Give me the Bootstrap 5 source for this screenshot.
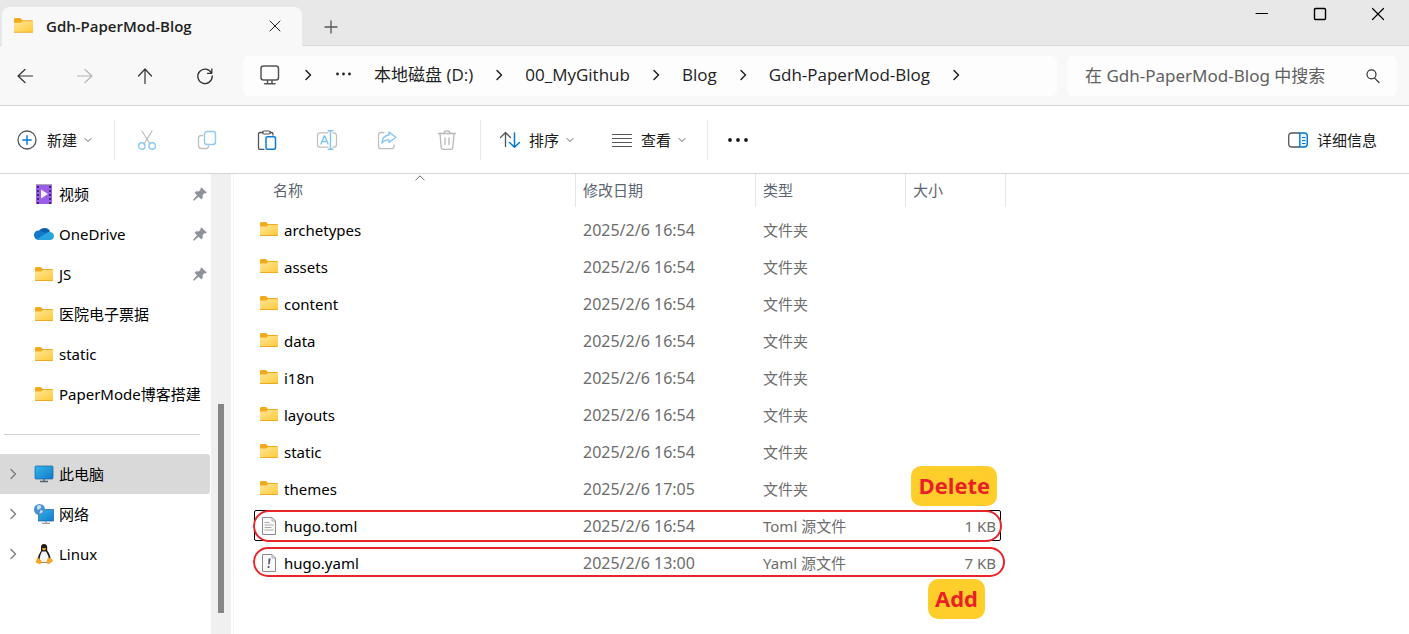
<!DOCTYPE html>
<html lang="zh-CN">
<head>
<meta charset="utf-8">
<meta name="viewport" content="width=device-width, initial-scale=1">
<title>Gdh-PaperMod-Blog</title>
<link href="https://cdn.jsdelivr.net/npm/bootstrap@5.3.0/dist/css/bootstrap.min.css" rel="stylesheet">
<style>
  body { font-family: "Noto Sans", "Noto Sans CJK SC", sans-serif; font-size: 15px; line-height: 20px; color: #000; background: #fff; }
  svg { display: block; flex: none; overflow: visible; }
  button { background: none; border: 0; padding: 0; color: inherit; }
  :where(.ln) { stroke-linecap: round; stroke-linejoin: round; }
  .ln:not([fill]) { fill: none; }
  .ln:not([stroke]) { stroke: currentColor; }
  g.ln[stroke] > * { stroke: inherit; }
  .titlebar { height: 46px; background: #e8e8e8; border-bottom: 1px solid #d9d9d9; padding-right: 2px; }
  .tab-item { width: 300px; height: 39px; margin: 7px 0 -1px 2px; padding: 0 20px 2px 12px; background: #f8f8f8; border-radius: 8px 8px 0 0; font-family: "Open Sans", sans-serif; font-weight: 600; color: #222; gap: 13px; }
  .win-btn { width: 58px; height: 28px; }
  .new-tab { width: 58px; height: 39px; margin-top: 7px; }
  .addressbar { height: 60px; background: #f8f8f8; border-bottom: 1px solid #d5d5d5; color: #333; }
  .nav-set { gap: 10px; }
  .nav-btn { width: 50px; height: 38px; }
  .nav-btn:disabled { color: #b5b5b5; }
  .crumbs, .search { height: 40px; background: #fdfdfd; border-radius: 6px; font-size: 17px; }
  .crumbs { gap: 22px; padding: 0 0 2px 17px; margin: 0 10px 0 13px; color: #222; font-family: "Open Sans", "Noto Sans CJK SC", sans-serif; }
  .crumbs a { color: inherit; text-decoration: none; white-space: nowrap; }
  .search { width: 330px; padding: 0 17px 0 18px; }
  .search input { border: 0; background: transparent; outline: 0; width: 100%; padding: 0; color: #606060; }
  .search input::placeholder { color: #606060; opacity: 1; }
  .toolbar { height: 68px; border-bottom: 1px solid #d5d5d5; color: #1a1a1a; }
  .tool { width: 60px; height: 40px; }
  .labelled { gap: 9px; white-space: nowrap; }
  .labelled .caret { color: #666; margin-left: -2px; }
  .divide { width: 1px; height: 40px; background: #e8e8e8; }
  .sidebar { width: 211px; }
  .side-item { height: 40px; padding: 0 3px 0 34px; gap: 5px; color: #000; text-decoration: none; white-space: nowrap; position: relative; margin-right: 1px; }
  .side-item.current { background: #d9d9d9; border-radius: 0 3px 3px 0; }
  .side-item .twist { position: absolute; left: 9px; color: #808080; }
  .side-sep { height: 1px; background: #d0d0d0; margin: 20px 11px 19px 4px; }
  .track { width: 20px; background: #f0f0f0; }
  .thumb { width: 6px; background: #868686; flex: 209 0 0; }
  .before-thumb { flex: 230 0 0; }
  .after-thumb { flex: 21 0 0; }
  .main { padding-left: 19px; margin-left: 2px; border-left: 1px solid #f3f3f3; }
  .files { width: 753px; table-layout: fixed; border-collapse: separate; border-spacing: 0; color: #6d6d6d; }
  .files .c-date { width: 180px; }
  .files .c-type { width: 150px; }
  .files .c-size { width: 100px; }
  .files th { height: 33px; font-weight: 400; padding: 0 0 2px 7px; border-right: 1px solid #e5e5e5; color: #5b6470; position: relative; }
  .files th:first-child { padding-left: 20px; }
  .files td { height: 37px; padding: 0 10px 2px 7px; white-space: nowrap; }
  .files td:nth-child(2) { font-size: 16px; }
  .files tbody tr { position: relative; }
  .files tbody::before { content: ""; display: block; height: 5px; }
  .files .fname { gap: 6px; color: #000; }
  .sort-mark { position: absolute; left: 162px; top: 0; color: #666; }
  .focus-box { position: absolute; inset: 2px 5px 4px 1px; border: 1px solid #000; border-radius: 2px; }
  .ring { position: absolute; inset: 2px 4px 3px 0; border: 2px solid #e8252a; border-radius: 16px; }
  .ring.wide { inset: 2px 1px 5px 0; }
  .note { position: absolute; right: 9px; top: -42px; height: 40px; padding: 0 7px; border-radius: 10px; background: #ffce2b; color: #ea1f27; font: 700 22px/38px "Open Sans", sans-serif; }
  .note.below { right: 21px; top: 34px; }
</style>
</head>
<body>
<svg width="0" height="0" class="position-absolute" aria-hidden="true">
  <defs>
    <linearGradient id="gf" x1="0" y1="0" x2="1" y2="1"><stop offset="0" stop-color="#ffe596"/><stop offset="1" stop-color="#ffcb3d"/></linearGradient>
    <linearGradient id="gs" x1="0" y1="0" x2="1" y2="1"><stop offset="0" stop-color="#30b8e8"/><stop offset="1" stop-color="#1478c8"/></linearGradient>
    <symbol id="folder" viewBox="0 0 18 15"><path d="M0 1.500Q0 0 1.200 0H6l1.800 2H17q1 0 1 1v10H0z" fill="#f2a91c"/><path d="M0 4.500h6.500L8 3h10v10.200H0z" fill="url(#gf)"/><path d="M0 13h18v.6q0 .4-.6.4H.6Q0 14 0 13.600z" fill="#eea91f"/></symbol>
    <symbol id="pin" viewBox="0 0 14 14"><path d="M8.500.8l4.800 4.600-1 .8-1-.3-2 2.200.2 2.600-1.200 1.200-2.700-2.400L1.200 13.200.5 13.300l.2-.8 3.600-4.300L1.900 5.700l1.200-1.100 2.600.1 2.200-1.900-.3-1.100z" fill="#8d9299" stroke="#8d9299" stroke-width=".6"/></symbol>
    <symbol id="next" viewBox="0 0 8 12"><path class="ln" stroke-width="1.500" d="M2 1.500L6.500 6 2 10.500"/></symbol>
    <symbol id="down" viewBox="0 0 8 8"><path class="ln" d="M1 2.500l3 3 3-3"/></symbol>
  </defs>
</svg>

<div class="min-vh-100 d-flex flex-column">
  <header class="titlebar d-flex">
    <div class="tab-item d-flex align-items-center">
      <svg width="19" height="16"><use href="#folder"/></svg>
      <span class="flex-grow-1 text-nowrap">Gdh-PaperMod-Blog</span>
      <button aria-label="关闭标签页"><svg width="14" height="14"><path class="ln" d="M2 2l10 10M12 2L2 12"/></svg></button>
    </div>
    <button class="new-tab" aria-label="新标签页"><svg class="mx-auto" width="14" height="14"><path class="ln" stroke="#555" stroke-width="1.300" d="M7 1v12M1 7h12"/></svg></button>
    <div class="ms-auto d-flex">
      <button class="win-btn" aria-label="最小化"><svg class="mx-auto" width="14" height="14"><path class="ln" stroke-width="1.200" d="M1 6.500h11.500"/></svg></button>
      <button class="win-btn" aria-label="最大化"><svg class="mx-auto" width="14" height="14"><rect class="ln" stroke-width="1.400" x="1.500" y="1.500" width="11" height="11" rx="1"/></svg></button>
      <button class="win-btn" aria-label="关闭"><svg class="mx-auto" width="14" height="14"><path class="ln" stroke-width="1.200" d="M1.500 1.500l11 11M12.500 1.500l-11 11"/></svg></button>
    </div>
  </header>

  <div class="addressbar d-flex align-items-center pe-1">
    <div class="nav-set d-flex">
      <button class="nav-btn" aria-label="后退"><svg class="mx-auto" width="16" height="16"><path class="ln" stroke-width="1.200" d="M15.500 8H1M8 1.500L1 8l7 6.500"/></svg></button>
      <button class="nav-btn" disabled aria-label="前进"><svg class="mx-auto" width="16" height="16"><path class="ln" stroke-width="1.200" d="M.5 8H15M8 1.500L15 8l-7 6.500"/></svg></button>
      <button class="nav-btn" aria-label="向上"><svg class="mx-auto" width="16" height="16"><path class="ln" stroke-width="1.200" d="M8 15.500V1M1.500 8L8 1l6.500 7"/></svg></button>
      <button class="nav-btn" aria-label="刷新"><svg class="mx-auto" width="16" height="16"><path class="ln" stroke-width="1.300" d="M14.500 5.200A7.200 7.200 0 1 0 15.200 8M14.800 1v4.300h-4.300"/></svg></button>
    </div>
    <nav class="crumbs d-flex align-items-center flex-grow-1 overflow-hidden" aria-label="路径">
      <svg width="22" height="20"><g class="ln" stroke="#555" stroke-width="1.500"><rect x="1" y="1" width="17.500" height="14" rx="2.500"/><path d="M7.500 15.500v3M12 15.500v3M4.500 18.700h10.500"/></g></svg>
      <svg width="8" height="12"><use href="#next"/></svg>
      <svg width="18" height="6"><g fill="#222"><circle cx="3.500" cy="2" r="1.400"/><circle cx="9.500" cy="2" r="1.400"/><circle cx="15.500" cy="2" r="1.400"/></g></svg>
      <a href="#">本地磁盘 (D:)</a>
      <svg width="8" height="12"><use href="#next"/></svg>
      <a href="#">00_MyGithub</a>
      <svg width="8" height="12"><use href="#next"/></svg>
      <a href="#">Blog</a>
      <svg width="8" height="12"><use href="#next"/></svg>
      <a href="#">Gdh-PaperMod-Blog</a>
      <svg width="8" height="12"><use href="#next"/></svg>
    </nav>
    <div class="search d-flex align-items-center me-2">
      <input type="search" aria-label="搜索" placeholder="在 Gdh-PaperMod-Blog 中搜索">
      <svg width="14" height="14"><path class="ln" stroke-width="1.200" d="M8.800 9.300L13 13.500M10 5.300a4.500 4.500 0 1 1-9 0a4.500 4.500 0 0 1 9 0z"/></svg>
    </div>
  </div>

  <div class="toolbar d-flex align-items-center">
    <button class="labelled d-flex align-items-center ps-3"><svg width="22" height="20"><circle class="ln" stroke="#555" stroke-width="1.300" cx="11" cy="10" r="9"/><path class="ln" stroke="#0078d4" stroke-width="1.400" d="M11 5.800v8.400M6.800 10h8.400"/></svg><span>新建</span><svg class="caret" width="8" height="8"><use href="#down"/></svg></button>
    <span class="divide" style="margin:0 2px 0 22px"></span>
    <button class="tool" aria-label="剪切"><svg class="mx-auto" width="20" height="20"><path class="ln" stroke="#bbb" stroke-width="1.200" d="M5 1l8 13M15 1L7 14"/><g class="ln" stroke="#8bcaf2" stroke-width="1.400"><circle cx="4.800" cy="16" r="3.200"/><circle cx="15.200" cy="16" r="3.200"/></g></svg></button>
    <button class="tool" aria-label="复制"><svg class="mx-auto" width="20" height="20"><path class="ln" stroke="#c0c0c0" stroke-width="1.300" d="M5.500 5.500H4q-2.500 0-2.500 2.500v7.500Q1.500 18.500 4.500 18.500H9q2.500 0 2.500-2.500"/><rect class="ln" stroke="#90caf0" stroke-width="1.400" x="7.500" y="1.500" width="11" height="13" rx="2.500"/></svg></button>
    <button class="tool" aria-label="粘贴"><svg class="mx-auto" width="20" height="20"><path class="ln" stroke="#555" stroke-width="1.300" d="M7 19.300H3q-1.500 0-1.500-1.500V4Q1.500 2.500 3 2.500h3M13 2.500h1.500q1.500 0 1.500 1.500v1"/><rect class="ln" stroke="#555" stroke-width="1.200" x="5.500" y="1" width="8" height="3" rx="1.500"/><rect class="ln" stroke="#0c7bd4" stroke-width="1.500" x="9" y="6.700" width="9.500" height="12.600" rx="1.500"/></svg></button>
    <button class="tool" aria-label="重命名"><svg class="mx-auto" width="20" height="20"><path class="ln" stroke="#c0c0c0" stroke-width="1.300" d="M11 2.800H3Q.5 2.800.5 5.500v9Q.5 17.200 3 17.200h8M16 2.800q3.500 0 3.500 2.700v9q0 2.700-3.500 2.700"/><path class="ln" stroke="#80c5f2" stroke-width="1.400" d="M4 14L7.200 6h.6L11 14M5.200 11.500h4.600M13.500.7v18.600M11.200.7h4.600M11.200 19.300h4.600"/></svg></button>
    <button class="tool" aria-label="共享"><svg class="mx-auto" width="20" height="20"><path class="ln" stroke="#c0c0c0" stroke-width="1.300" d="M7 2.500H4Q1.500 2.500 1.500 5v11Q1.500 18.700 4 18.700h10.500q2.500 0 2.500-2.700v-1"/><path class="ln" stroke="#80c5f2" stroke-width="1.300" d="M12 2l6.800 5.300L12 12.500V10Q7.500 9.500 4.800 13.200 5.500 5.500 12 5z"/></svg></button>
    <button class="tool" aria-label="删除"><svg class="mx-auto" width="20" height="20"><path class="ln" stroke="#b8b8b8" stroke-width="1.300" d="M1.500 3.500h17M7 3.200Q7 .8 10 .8t3 2.400M3 3.700l1.200 13.500q.2 2.100 2.200 2.100h7.200q2 0 2.200-2.100L17 3.700M8 8v6.500M12 8v6.500"/></svg></button>
    <span class="divide" style="margin:0 19px 0 3px"></span>
    <button class="labelled d-flex align-items-center"><svg width="20" height="20"><path class="ln" stroke="#555" stroke-width="1.300" d="M5.500 16.500V2.500M.5 7.500l5-5 5 5"/><path class="ln" stroke="#0078d4" stroke-width="1.500" d="M14.500 3v14M9.500 12.500l5 4.800 5-4.800"/></svg><span>排序</span><svg class="caret" width="8" height="8"><use href="#down"/></svg></button>
    <button class="labelled d-flex align-items-center" style="margin-left:38px"><svg width="20" height="20"><path class="ln" stroke="#555" stroke-width="1.200" d="M.5 4.500h19M.5 8.500h19M.5 12.500h19M.5 16.500h19"/></svg><span>查看</span><svg class="caret" width="8" height="8"><use href="#down"/></svg></button>
    <span class="divide" style="margin-left:21px"></span>
    <button class="tool" aria-label="更多"><svg class="mx-auto" width="20" height="6"><g fill="#1a1a1a"><circle cx="2" cy="3" r="1.900"/><circle cx="10" cy="3" r="1.900"/><circle cx="18" cy="3" r="1.900"/></g></svg></button>
    <button class="labelled d-flex align-items-center ms-auto me-3 pe-3"><svg width="20" height="16"><path class="ln" stroke="#555" stroke-width="1.300" d="M11.500 1H4Q.7 1 .7 4v8q0 3 3.300 3h7.500"/><path class="ln" fill="#e8f4fc" stroke="#0078d4" stroke-width="1.400" d="M11.800 1H16q3.300 0 3.300 3v8q0 3-3.300 3h-4.200z"/><path stroke="#0078d4" d="M14 5.500h3.500M14 8.500h3.500M14 11.500h3.500"/></svg><span>详细信息</span></button>
  </div>

  <div class="d-flex flex-grow-1">
    <nav class="sidebar flex-shrink-0" aria-label="导航窗格">
      <a href="#" class="side-item d-flex align-items-center"><svg width="20" height="20"><path d="M2 0h16v20H2z" fill="#9b5de5"/><path d="M2 0h16v1H2z" fill="#aaa"/><path d="M4 2v18M16 2v18" stroke="#42296f" stroke-width="2" stroke-dasharray="2 2"/><path d="M7 5.500l7 4.500-7 4.500z" fill="#f4f0fa"/></svg><span class="flex-grow-1">视频</span><svg width="14" height="14"><use href="#pin"/></svg></a>
      <a href="#" class="side-item d-flex align-items-center"><svg width="20" height="14"><path d="M4 7a6.500 6.500 0 0 1 12-3l-4 6z" fill="#0860ae"/><path d="M5 13a4.800 4.800 0 1 1 2-9l9 4-5 5z" fill="#1479cb"/><path d="M3 12.300L14 5q5.500-.8 6 4-.3 4-4 4H5.500q-1.500 0-2.500-.7z" fill="#28a5df"/></svg><span class="flex-grow-1">OneDrive</span><svg width="14" height="14"><use href="#pin"/></svg></a>
      <a href="#" class="side-item d-flex align-items-center"><svg width="20" height="15"><use href="#folder"/></svg><span class="flex-grow-1">JS</span><svg width="14" height="14"><use href="#pin"/></svg></a>
      <a href="#" class="side-item d-flex align-items-center"><svg width="20" height="15"><use href="#folder"/></svg><span>医院电子票据</span></a>
      <a href="#" class="side-item d-flex align-items-center"><svg width="20" height="15"><use href="#folder"/></svg><span>static</span></a>
      <a href="#" class="side-item d-flex align-items-center"><svg width="20" height="15"><use href="#folder"/></svg><span>PaperMode博客搭建</span></a>
      <div class="side-sep"></div>
      <a href="#" class="side-item current d-flex align-items-center"><svg class="twist" width="8" height="12"><use href="#next"/></svg><svg width="20" height="18"><rect x="1" y="1" width="18" height="13" rx="1" fill="url(#gs)" stroke="#1565a8" stroke-width=".7"/><path d="M10 14v2M6 16.500h8" stroke="#56606a" stroke-width="1.300"/></svg><span>此电脑</span></a>
      <a href="#" class="side-item d-flex align-items-center"><svg class="twist" width="8" height="12"><use href="#next"/></svg><svg width="20" height="20"><rect x="4.500" y="5.500" width="15" height="11.500" fill="url(#gs)" stroke="#1565a8" stroke-width=".7"/><path d="M12 17v2M8 19.400h8" stroke="#999" stroke-width="1.200"/><circle cx="5.500" cy="5.500" r="5.500" fill="#4b8fd0"/><path d="M3 2q3-2 4 0t-1 3-3 0zM6.500 6q3 0 2 2t-3 1z" fill="#c3def4"/></svg><span>网络</span></a>
      <a href="#" class="side-item d-flex align-items-center"><svg class="twist" width="8" height="12"><use href="#next"/></svg><svg width="20" height="20"><path d="M7 3q0-3 3-3t3.200 3v3.500q3.800 5 3.300 9L14 19H6l-2.500-3.500Q4 11 7 7z" fill="#1d1d1d"/><path d="M8 7.500h4q3 4 2.500 8L13 18.500H7.500L5.500 15Q6 11 8 7.500z" fill="#f3f3f3"/><path d="M8 4h4l-.5 1.800-1.500.8-1.500-.8z" fill="#f0a020"/><path d="M3.500 13l4.800 5q-.5 2-2.800 2L1.500 18.500zM14 13.500l3.500 1 1.500 2.500-4 3q-2.500 0-2.300-2.500z" fill="#f5a623"/></svg><span>Linux</span></a>
    </nav>
    <div class="track d-flex flex-column align-items-center flex-shrink-0" aria-hidden="true">
      <div class="before-thumb"></div><div class="thumb"></div><div class="after-thumb"></div>
    </div>

    <main class="main flex-grow-1">
      <table class="files">
        <colgroup><col><col class="c-date"><col class="c-type"><col class="c-size"></colgroup>
        <thead><tr><th>名称<svg class="sort-mark" width="10" height="8"><path class="ln" d="M.8 6L5 1.800 9.200 6"/></svg></th><th>修改日期</th><th>类型</th><th>大小</th></tr></thead>
        <tbody>
          <tr><td><div class="fname d-flex align-items-center"><svg width="18" height="15"><use href="#folder"/></svg>archetypes</div></td><td>2025/2/6 16:54</td><td>文件夹</td><td></td></tr>
          <tr><td><div class="fname d-flex align-items-center"><svg width="18" height="15"><use href="#folder"/></svg>assets</div></td><td>2025/2/6 16:54</td><td>文件夹</td><td></td></tr>
          <tr><td><div class="fname d-flex align-items-center"><svg width="18" height="15"><use href="#folder"/></svg>content</div></td><td>2025/2/6 16:54</td><td>文件夹</td><td></td></tr>
          <tr><td><div class="fname d-flex align-items-center"><svg width="18" height="15"><use href="#folder"/></svg>data</div></td><td>2025/2/6 16:54</td><td>文件夹</td><td></td></tr>
          <tr><td><div class="fname d-flex align-items-center"><svg width="18" height="15"><use href="#folder"/></svg>i18n</div></td><td>2025/2/6 16:54</td><td>文件夹</td><td></td></tr>
          <tr><td><div class="fname d-flex align-items-center"><svg width="18" height="15"><use href="#folder"/></svg>layouts</div></td><td>2025/2/6 16:54</td><td>文件夹</td><td></td></tr>
          <tr><td><div class="fname d-flex align-items-center"><svg width="18" height="15"><use href="#folder"/></svg>static</div></td><td>2025/2/6 16:54</td><td>文件夹</td><td></td></tr>
          <tr><td><div class="fname d-flex align-items-center"><svg width="18" height="15"><use href="#folder"/></svg>themes</div></td><td>2025/2/6 17:05</td><td>文件夹</td><td></td></tr>
          <tr><td><div class="fname d-flex align-items-center"><svg width="18" height="18"><path d="M2.500.5h9.500l3.500 3.500v13.500h-13z" fill="#fafafa" stroke="#8a8a8a"/><path d="M12 .5V4h3.500M4.500 5.500h5M4.500 8h9M4.500 10.500h7M4.500 13h9" fill="none" stroke="#aaa"/></svg>hugo.toml</div><div class="focus-box"></div><div class="ring"></div></td><td>2025/2/6 16:54</td><td>Toml 源文件</td><td class="text-end">1 KB<span class="note">Delete</span></td></tr>
          <tr><td><div class="fname d-flex align-items-center"><svg width="18" height="18"><path d="M2.500.5h9.500l3.500 3.500v13.500h-13z" fill="#fafafa" stroke="#8a8a8a"/><path d="M12 .5V4h3.500" fill="none" stroke="#aaa"/><path d="M8.500 4.500h2.200l-1.200 6H8.200zM7.800 12h1.800l-.3 2H7.500z" fill="#5d5580"/></svg>hugo.yaml</div><div class="ring wide"></div></td><td>2025/2/6 13:00</td><td>Yaml 源文件</td><td class="text-end">7 KB<span class="note below">Add</span></td></tr>
        </tbody>
      </table>
    </main>
  </div>
</div>
<script src="https://cdn.jsdelivr.net/npm/bootstrap@5.3.0/dist/js/bootstrap.bundle.min.js"></script>
</body>
</html>
